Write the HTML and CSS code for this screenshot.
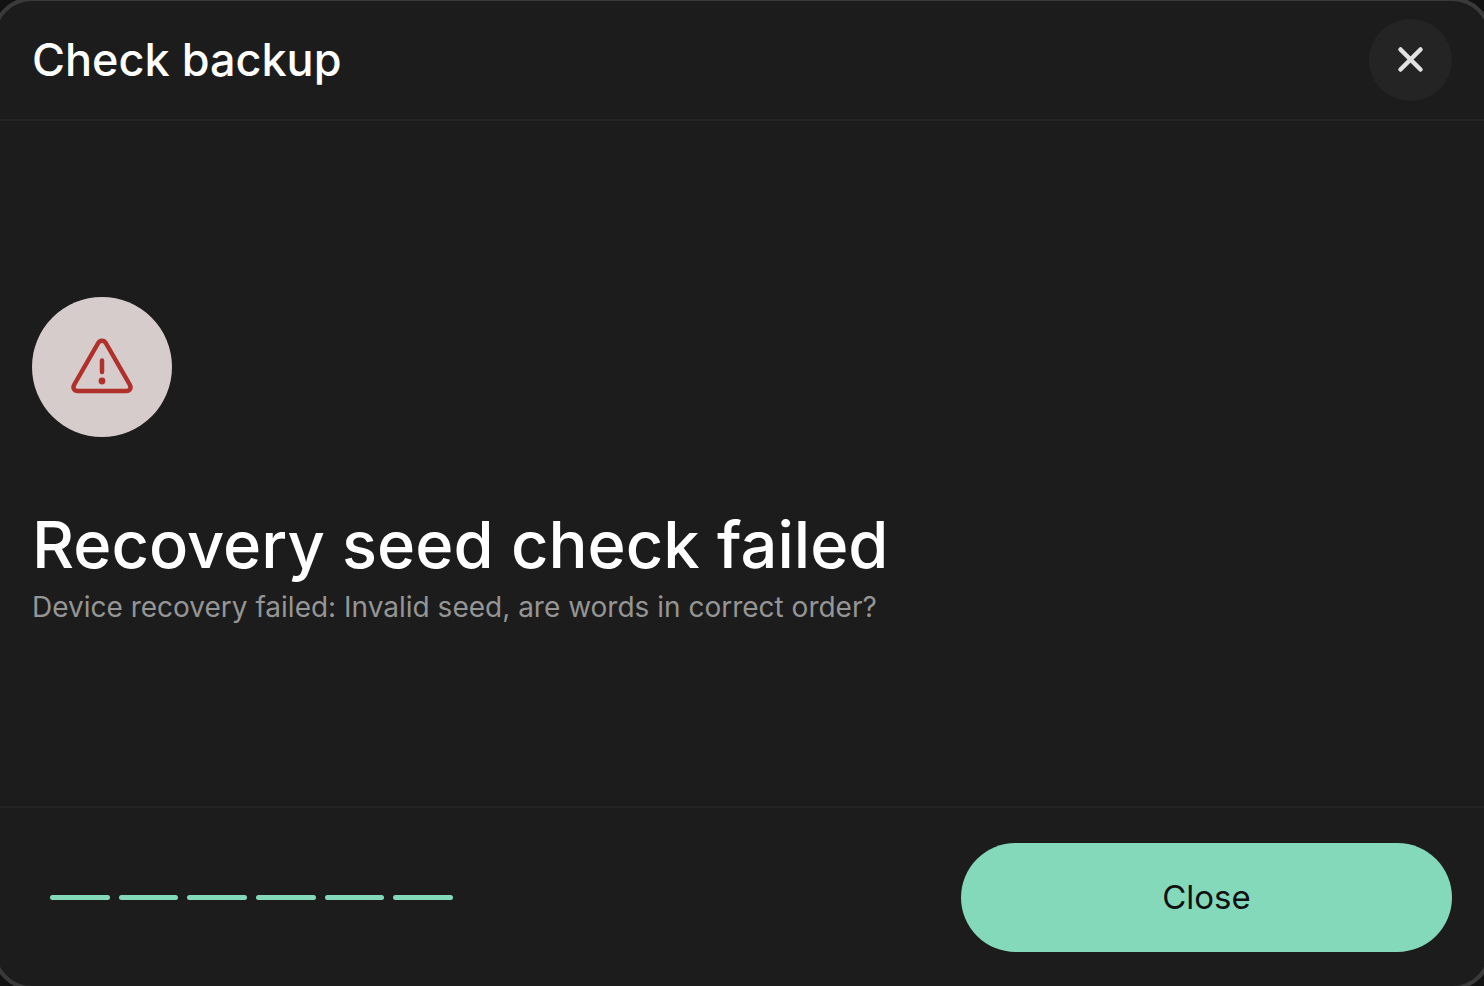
FILE: index.html
```html
<!DOCTYPE html>
<html lang="en">
<head>
<meta charset="utf-8">
<meta name="viewport" content="width=device-width, initial-scale=1">
<title>Check backup</title>
<link rel="stylesheet" href="styles.css">
</head>
<body>
<main class="dialog" role="dialog" aria-labelledby="dialog-title">
  <header class="dialog-header">
    <h1 class="dialog-title" id="dialog-title">Check backup</h1>
    <button class="dismiss" type="button" aria-label="Close dialog">
      <svg class="dismiss-icon" viewBox="0 0 28 28" aria-hidden="true"><path d="M3.500 3.500 23.500 23.500M23.500 3.500 3.500 23.500"/></svg>
    </button>
  </header>
  <section class="dialog-body">
    <div class="status">
      <svg class="status-icon" viewBox="0 0 64 64" aria-hidden="true">
        <path d="M28.200 8 4.300 49.500C2.300 53.200 4.200 56 7.800 56H56.200C59.800 56 61.700 53.200 59.700 49.500L35.800 8C33.900 4.900 30.100 4.900 28.200 8Z"/>
        <path d="M32 25.500V37"/>
        <circle cx="32" cy="46" r="3.400"/>
      </svg>
    </div>
    <h2 class="headline">Recovery seed check failed</h2>
    <p class="detail">Device recovery failed: Invalid seed, are words in correct order?</p>
  </section>
  <footer class="dialog-footer">
    <div class="steps" role="img" aria-label="All steps finished">
      <span class="step"></span><span class="step"></span><span class="step"></span><span class="step"></span><span class="step"></span><span class="step"></span>
    </div>
    <button class="primary" type="button">Close</button>
  </footer>
</main>
</body>
</html>
```
FILE: styles.css
```css
* { box-sizing: border-box; }

body {
  display: flex;
  min-height: 100vh;
  margin: 0;
  overflow: hidden;
  background: #121212;
  color: #fff;
  font-family: Inter, "Liberation Sans", sans-serif;
}

/* The dialog's frame bleeds past the window edges. */
.dialog {
  flex: 1;
  display: flex;
  flex-direction: column;
  min-height: calc(100vh + 7px);
  margin: -3px -8px -4px;
  border: 4px solid #3a3a3a;
  border-radius: 40px;
  background: #1c1c1c;
}

.dialog-header {
  display: flex;
  align-items: center;
  justify-content: space-between;
  padding: 18px 36px;
  border-bottom: 2px solid #242424;
}

.dialog-title {
  margin: 0;
  font-size: 45px;
  font-weight: 500;
  line-height: 56px;
}

.dismiss {
  display: grid;
  place-items: center;
  width: 83px;
  height: 82px;
  padding: 0;
  border: 0;
  border-radius: 50%;
  background: #242424;
  cursor: pointer;
}

.dismiss-icon {
  width: 28px;
  height: 28px;
  fill: none;
  stroke: #e2e2e2;
  stroke-width: 4.5;
  stroke-linecap: round;
}

.dialog-body {
  flex: 1;
  display: flex;
  flex-direction: column;
  justify-content: center;
  align-items: flex-start;
  padding: 32px 36px;
}

.status {
  display: grid;
  place-items: center;
  width: 140px;
  height: 140px;
  margin-bottom: 68px;
  border-radius: 50%;
  background: #d6cccb;
}

.status-icon {
  width: 64px;
  height: 64px;
  fill: none;
  stroke: #b0302c;
  stroke-width: 4.5;
  stroke-linecap: round;
  stroke-linejoin: round;
}

.status-icon circle {
  fill: #b0302c;
  stroke: none;
}

.headline {
  margin: 0;
  font-size: 65px;
  font-weight: 500;
  line-height: 80px;
}

.detail {
  margin: 0;
  color: #959595;
  font-size: 28px;
  font-weight: 400;
  line-height: 45px;
}

.dialog-footer {
  display: flex;
  align-items: center;
  justify-content: space-between;
  gap: 32px;
  padding: 35px 36px 34px;
  border-top: 2px solid #242424;
}

.steps {
  flex: 0 1 403px;
  display: flex;
  gap: 9px;
  margin-left: 18px;
}

.step {
  flex: 1;
  height: 5px;
  border-radius: 3px;
  background: #85d9bb;
}

.primary {
  flex: 0 1 491px;
  padding: 32px;
  border: 0;
  border-radius: 55px;
  background: #85d9bb;
  color: #111;
  font-family: inherit;
  font-size: 33px;
  line-height: 45px;
  cursor: pointer;
}
```
